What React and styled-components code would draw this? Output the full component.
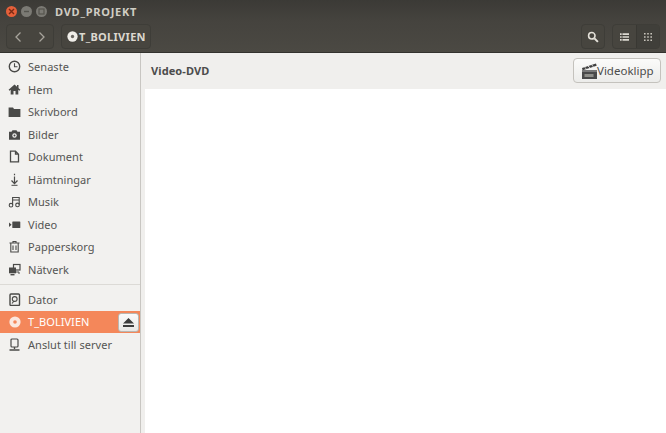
import React from "react";
import styled, { createGlobalStyle } from "styled-components";

const Global = createGlobalStyle`
  html, body { margin: 0; padding: 0; background: #fff; }
  * { box-sizing: border-box; }
  body { font-family: "Noto Sans", "Open Sans", sans-serif; }
`;
const Win = styled.div`width:666px;height:433px;display:flex;flex-direction:column;overflow:hidden;`;
const Head = styled.div`height:53px;flex:none;background:linear-gradient(#3b3a36,#45433e 40%,#4b4943);border-bottom:1px solid #33322e;display:flex;flex-direction:column;`;
const TitleBar = styled.div`height:22px;flex:none;display:flex;align-items:center;padding:0 0 0 6px;`;
const Dots = styled.div`display:flex;gap:4px;align-items:center;width:49px;`;
const Dot = styled.div`width:11px;height:11px;border-radius:50%;background:${p=>p.$c};display:flex;align-items:center;justify-content:center;`;
const Title = styled.div`font-size:11px;font-weight:700;color:#d0cdc4;letter-spacing:.75px;`;
const Tools = styled.div`flex:1;display:flex;align-items:center;padding:2px 6px 4px 6px;gap:7px;`;
const Group = styled.div`height:25px;display:flex;border:1px solid #3e3d38;border-radius:4px;background:#47453f;overflow:hidden;`;
const Btn = styled.div`width:${p=>p.$w||24}px;height:100%;display:flex;align-items:center;justify-content:center;border-left:${p=>p.$div?"1px solid #393833":"0"};background:${p=>p.$dark?"#403f3a":"transparent"};`;
const Crumb = styled.div`height:25px;width:90px;display:flex;align-items:center;gap:1px;padding-left:5px;border:1px solid #3e3d38;border-radius:4px;background:#47453f;color:#dcd8cf;font-size:11px;font-weight:700;letter-spacing:.3px;`;
const Spacer = styled.div`flex:1;`;
const Main = styled.div`flex:1;display:flex;min-height:0;`;
const Side = styled.div`width:141px;flex:none;background:#f2f1ef;border-right:1px solid #c8c6c2;padding-top:2.5px;`;
const Row = styled.div`height:22.5px;display:flex;align-items:center;padding-left:8px;gap:7px;font-size:11px;letter-spacing:.04px;color:${p=>p.$sel?"#fff":"#555553"};background:${p=>p.$sel?"#f4875a":"transparent"};position:relative;`;
const Ic = styled.svg`width:13px;height:13px;flex:none;`;
const DiscSlot = styled.span`width:13px;height:13px;flex:none;display:flex;align-items:center;justify-content:center;`;
const Sep = styled.div`height:1px;background:#dcdad6;margin:3.5px 0 3px;`;
const Eject = styled.div`position:absolute;right:1px;top:2px;width:21px;height:19px;border:1px solid #b9b7b2;border-radius:3px;background:linear-gradient(#fafafa,#e8e7e5);display:flex;align-items:center;justify-content:center;`;
const Content = styled.div`flex:1;display:flex;flex-direction:column;background:#f0efed;padding-left:4px;`;
const Bar = styled.div`height:36px;flex:none;display:flex;align-items:center;justify-content:space-between;padding:0 5px 1px 6px;`;
const BarTitle = styled.div`font-size:11px;font-weight:700;color:#4c4c4c;letter-spacing:.1px;`;
const ClipBtn = styled.div`width:88px;height:25px;border:1px solid #c4c2bd;border-radius:4px;background:linear-gradient(#fbfbfa,#ececea);display:flex;align-items:center;padding-left:7px;font-size:11.5px;color:#4c4c4c;`;
const ClipIcon = styled.svg`width:17px;height:18px;flex:none;margin-right:-1px;`;
const White = styled.div`flex:1;background:#fff;`;

const S={fill:"none",stroke:"#4a4a48",strokeWidth:1.4};
const F={fill:"#4a4a48"};
const Disc=({c="#f0eee9",h="#6a6862",s=11})=><svg width={s} height={s} viewBox="0 0 12 12"><circle cx="6" cy="6" r="5.6" fill={c}/><circle cx="6" cy="6" r="1.8" fill={h}/></svg>;
const icons={
 clock:<><circle cx="6.5" cy="6.5" r="5.2" {...S}/><path d="M6.5 3.2v3.5H9.5" {...S} strokeWidth="1.1"/></>,
 home:<><path d="M6.5 1.5L0.6 6.8l.9 1 1.2-1v4.7h2.8V8h2v3.5h2.8V6.8l1.2 1 .9-1z" {...F}/><rect x="9" y="2" width="1.5" height="3" {...F}/></>,
 folder:<path d="M.6 2.5h4.4l1 1.5h6.4v8H.6z" {...F}/>,
 cam:<><path d="M1 3.7h2.5l1-1.5h4l1 1.5H12v8H1z" {...F}/><circle cx="6.5" cy="7.5" r="2.2" fill="#f2f1ef"/><circle cx="6.5" cy="7.5" r="1" {...F}/></>,
 doc:<path d="M2.5 1.2h5l3 3v7.6h-8zM7.5 1.2v3h3" {...S} strokeWidth="1.3"/>,
 down:<><path d="M6.5 .8v1.4M6.5 3.5v7M3.5 7.5l3 3.2 3-3.2" {...S} strokeWidth="1.2"/><path d="M3.5 12.3h6" {...S} strokeWidth="1"/></>,
 music:<><path d="M4.6 10V2.5h6.6V9.7M4.6 5h6.6" {...S} strokeWidth="1.1"/><circle cx="3" cy="10.2" r="1.8" {...S} strokeWidth="1.1"/><circle cx="9.5" cy="9.9" r="1.8" {...S} strokeWidth="1.1"/></>,
 video:<><rect x="4.3" y="3.5" width="8" height="6.5" rx=".6" {...F}/><path d="M1 4.5l2.6 2.2L1 8.9z" {...F}/></>,
 trash:<path d="M1.5 3h10M5 3V1.5h3V3M2.8 3.3v8.7h7.4V3.3M5 5.5v4.5M8 5.5v4.5" {...S} strokeWidth="1.1"/>,
 net:<><rect x="5.5" y="1.5" width="6.5" height="5.5" {...S} strokeWidth="1.2"/><rect x="1" y="4.5" width="7" height="5.8" {...F}/><path d="M2.5 11.7h4" {...S}/><path d="M8 9h3v2" {...S} strokeWidth="1"/></>,
 hd:<><rect x="2" y="1" width="9.5" height="11.5" rx="1" {...S}/><circle cx="6.7" cy="6" r="2.4" {...S} strokeWidth="1.1"/><path d="M6 8l-2 2.5" {...S} strokeWidth="1.1"/></>,
 srv:<><rect x="3" y="1" width="7" height="8" rx="1" {...S} strokeWidth="1.2"/><path d="M6.5 9v2M1.5 12h10" {...S}/></>,
};
const Icon=({n})=><Ic viewBox="0 0 13 13">{icons[n]}</Ic>;
const top=[["clock","Senaste"],["home","Hem"],["folder","Skrivbord"],["cam","Bilder"],["doc","Dokument"],["down","Hämtningar"],["music","Musik"],["video","Video"],["trash","Papperskorg"],["net","Nätverk"]];

export default function App(){
 return <Win><Global/>
  <Head>
   <TitleBar>
    <Dots>
     <Dot $c="#e5603a"><svg width="7" height="7" viewBox="0 0 7 7"><path d="M1 1l5 5M6 1L1 6" stroke="#7a2a14" strokeWidth="1.4"/></svg></Dot>
     <Dot $c="#7b7a74"><svg width="7" height="7" viewBox="0 0 7 7"><path d="M1 3.5h5" stroke="#55544e" strokeWidth="1.4"/></svg></Dot>
     <Dot $c="#7b7a74"><svg width="7" height="7" viewBox="0 0 7 7"><rect x="1" y="1" width="5" height="5" fill="none" stroke="#55544e" strokeWidth="1.2"/></svg></Dot>
    </Dots>
    <Title>DVD_PROJEKT</Title>
   </TitleBar>
   <Tools>
    <Group>
     <Btn $w={23}><svg width="9" height="12" viewBox="0 0 9 12"><path d="M6.5 1.5L2 6l4.5 4.5" fill="none" stroke="#a7a49c" strokeWidth="1.3"/></svg></Btn>
     <Btn $w={23}><svg width="9" height="12" viewBox="0 0 9 12"><path d="M2.5 1.5L7 6l-4.5 4.5" fill="none" stroke="#a7a49c" strokeWidth="1.3"/></svg></Btn>
    </Group>
    <Crumb><Disc/>T_BOLIVIEN</Crumb>
    <Spacer/>
    <Group><Btn $w={22}><svg width="12" height="12" viewBox="0 0 13 13"><circle cx="5.2" cy="5.2" r="3.5" fill="none" stroke="#e4e1d9" strokeWidth="1.7"/><path d="M8 8l3.8 3.8" stroke="#e4e1d9" strokeWidth="2.2"/></svg></Btn></Group>
    <Group>
     <Btn $w={23}><svg width="9" height="8" viewBox="0 0 11 9" fill="#dcd9d1"><path d="M0 0h2v2H0zM3 0h8v2H3zM0 3.5h2v2H0zM3 3.5h8v2H3zM0 7h2v2H0zM3 7h8v2H3z"/></svg></Btn>
     <Btn $w={23} $div $dark><svg width="8" height="8" viewBox="0 0 10 10" fill="#c8c5bc"><path d="M0 0h2v2H0zM4 0h2v2H4zM8 0h2v2H8zM0 4h2v2H0zM4 4h2v2H4zM8 4h2v2H8zM0 8h2v2H0zM4 8h2v2H4zM8 8h2v2H8z"/></svg></Btn>
    </Group>
   </Tools>
  </Head>
  <Main>
   <Side>
    {top.map(([i,t])=><Row key={t}><Icon n={i}/>{t}</Row>)}
    <Sep/>
    <Row><Icon n="hd"/>Dator</Row>
    <Row $sel><DiscSlot><Disc c="#fbe7de" h="#f4875a" s={12}/></DiscSlot>T_BOLIVIEN
     <Eject><svg width="11" height="9" viewBox="0 0 11 9" fill="#3c3c3c"><path d="M5.5 0L11 5.5H0zM0 7h11v2H0z"/></svg></Eject>
    </Row>
    <Row><Icon n="srv"/>Anslut till server</Row>
   </Side>
   <Content>
    <Bar>
     <BarTitle>Video-DVD</BarTitle>
     <ClipBtn>
      <ClipIcon viewBox="0 0 17 18">
       <path d="M1 6L15 1.5l.7 2.2L1.6 8.2z" fill="#3f3f3f"/><path d="M3.5 5.2l2 1.8M7 4l2 1.8M10.5 2.9l2 1.8" stroke="#ddd" strokeWidth="1"/>
       <rect x="1" y="8" width="15" height="9" fill="#4a4a4a"/><rect x="1" y="8" width="15" height="2" fill="#7a7a7a"/><rect x="3.5" y="12" width="9" height="3" fill="#8f8f8a"/>
      </ClipIcon>Videoklipp
     </ClipBtn>
    </Bar>
    <White/>
   </Content>
  </Main>
 </Win>;
}
